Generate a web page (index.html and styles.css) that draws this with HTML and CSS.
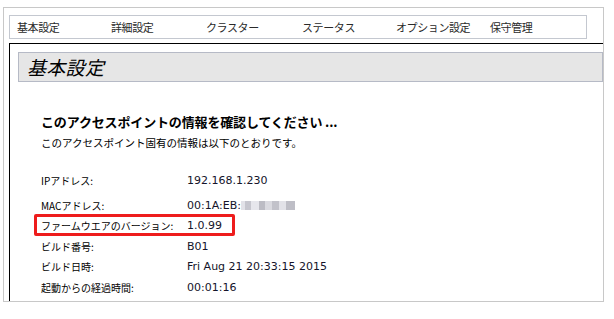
FILE: index.html
```html
<!DOCTYPE html>
<html lang="ja">
<head>
<meta charset="utf-8">
<title>基本設定</title>
<link rel="stylesheet" href="styles.css">
</head>
<body>
<div class="frame">
  <nav class="nav">
    <span class="nav-item w94">基本設定</span>
    <span class="nav-item w95">詳細設定</span>
    <span class="nav-item w96">クラスター</span>
    <span class="nav-item w94">ステータス</span>
    <span class="nav-item w94">オプション設定</span>
    <span class="nav-item">保守管理</span>
  </nav>
  <div class="content">
    <div class="heading">基本設定</div>
    <div class="body">
      <h1 class="title">このアクセスポイントの情報を確認してください ...</h1>
      <p class="sub">このアクセスポイント固有の情報は以下のとおりです。</p>
      <table class="info">
        <tr class="first"><td class="label">IPアドレス:</td><td class="value">192.168.1.230</td></tr>
        <tr><td class="label">MACアドレス:</td><td class="value">00:1A:EB:<span class="blur"></span></td></tr>
        <tr><td class="label mark">ファームウエアのバージョン:</td><td class="value">1.0.99</td></tr>
        <tr><td class="label">ビルド番号:</td><td class="value">B01</td></tr>
        <tr><td class="label">ビルド日時:</td><td class="value">Fri Aug 21 20:33:15 2015</td></tr>
        <tr><td class="label">起動からの経過時間:</td><td class="value">00:01:16</td></tr>
      </table>
    </div>
  </div>
</div>
</body>
</html>
```
FILE: styles.css
```css
html, body {
  margin: 0;
  padding: 0;
  background: #ffffff;
}
body {
  font-family: "Noto Sans CJK JP", "DejaVu Sans", sans-serif;
  color: #000;
}
.frame {
  margin: 7px 0 0 3px;
  width: 601px;
  height: 295px;
  box-sizing: border-box;
  border: 1px solid #c8c8c8;
  padding: 7px 0 0 5px;
}
.nav {
  width: 578px;
  height: 24px;
  box-sizing: border-box;
  border: 1px solid #c4c8d0;
  display: flex;
  align-items: center;
  padding-left: 7px;
  font-size: 11px;
  letter-spacing: -0.4px;
  color: #2a2a2a;
}
.nav-item { flex: none; line-height: 14px; }
.w94 { width: 94px; }
.w95 { width: 95px; }
.w96 { width: 96px; }
.content {
  margin-top: 4px;
  width: 594px;
  height: 258px;
  box-sizing: border-box;
  border-top: 1px solid #000;
  border-left: 1px solid #000;
}
.heading {
  margin: 8px 0 0 8px;
  height: 30px;
  box-sizing: border-box;
  border: 1px solid #b6bac6;
  background: #e6e6e6;
  font-size: 19px;
  font-style: italic;
  line-height: 28px;
  padding-left: 8px;
  letter-spacing: 0.3px;
}
.body {
  padding-left: 31px;
}
.title {
  margin: 32px 0 0 0;
  font-size: 13px;
  font-weight: bold;
  line-height: 16px;
  letter-spacing: -0.15px;
}
.sub {
  margin: 6px 0 0 0;
  font-size: 10.5px;
  line-height: 14px;
}
.info {
  margin-top: 21px;
  border-collapse: collapse;
}
.info td {
  padding: 0;
  height: 20.5px;
  line-height: 20.5px;
  vertical-align: top;
}
.info tr.first td {
  height: 24.5px;
  line-height: 20px;
}
.label {
  width: 146px;
  font-size: 10px;
  position: relative;
  white-space: nowrap;
}
.value {
  font-family: "DejaVu Sans", sans-serif;
  font-size: 11px;
  color: #14142a;
}
.mark::after {
  content: "";
  position: absolute;
  left: -7px;
  top: -2px;
  width: 201px;
  height: 22px;
  box-sizing: border-box;
  border: 3px solid #ee1c1c;
  border-radius: 2px;
}
.blur {
  display: inline-block;
  width: 54px;
  height: 9px;
  vertical-align: -1px;
  background: linear-gradient(90deg,
    #e2e2e8 0 8%, #c6c6ce 8% 18%, #e6e6ec 18% 33%, #bcbcc4 33% 44%,
    #dadae0 44% 58%, #c2c2ca 58% 70%, #e2e2e8 70% 84%, #bebec6 84% 100%);
}
```
